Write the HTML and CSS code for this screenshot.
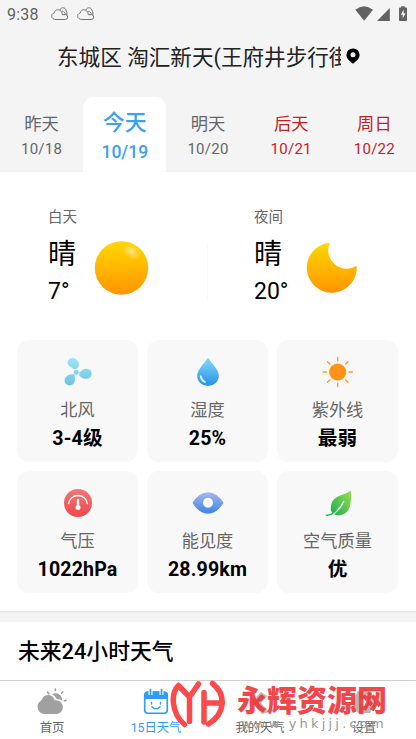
FILE: index.html
```html
<!DOCTYPE html>
<html lang="zh-CN">
<head>
<meta charset="utf-8">
<title>15日天气</title>
<link rel="stylesheet" href="styles.css">
</head>
<body>
<svg width="0" height="0" class="defs">
  <defs>
    <linearGradient id="gold" x1="0" y1="0" x2="0" y2="1"><stop offset="0" stop-color="#ffd800"/><stop offset="1" stop-color="#ff9500"/></linearGradient>
    <radialGradient id="shine"><stop offset="0" stop-color="#fff" stop-opacity=".5"/><stop offset="1" stop-color="#fff" stop-opacity="0"/></radialGradient>
    <linearGradient id="fan" gradientUnits="userSpaceOnUse" x1="0" y1="2" x2="0" y2="30"><stop offset="0" stop-color="#99e4fb"/><stop offset="1" stop-color="#6dc3e0"/></linearGradient>
    <linearGradient id="drop" x1="0" y1="0" x2="0" y2="1"><stop offset="0" stop-color="#85dafa"/><stop offset="1" stop-color="#2590e8"/></linearGradient>
    <linearGradient id="eye" x1="0" y1="0" x2="0" y2="1"><stop offset="0" stop-color="#a9b8ed"/><stop offset="1" stop-color="#3985e9"/></linearGradient>
    <linearGradient id="leaf" x1="1" y1="0" x2="0" y2="1"><stop offset="0" stop-color="#9bdf50"/><stop offset="1" stop-color="#17ae50"/></linearGradient>
    <linearGradient id="gauge" x1="0" y1="0" x2="0" y2="1"><stop offset="0" stop-color="#f07878"/><stop offset="1" stop-color="#f0464c"/></linearGradient>
    <symbol id="cloud" viewBox="0 0 18 14"><path d="M5 12.5H14.2A2.4 2.4 0 0 0 14.3 7.6L11.3 7.7C11.2 1.8 3.8 1.2 3.4 5.8C-.8 7-.1 12.5 5 12.5ZM9 2.8C9.8.1 15-.2 15.2 4.2C16.2 5.2 16 7 15.7 8.2M11.2 4.2C13 4.2 14.2 5.5 14.4 7.5" fill="none" stroke="#666" stroke-width=".9"/></symbol>
  </defs>
</svg>
<header class="top">
  <div class="status">
    <span class="clock">9:38</span>
    <svg class="cloud" width="18" height="14"><use href="#cloud"/></svg>
    <svg class="cloud second" width="18" height="14"><use href="#cloud"/></svg>
    <svg class="signals" width="53" height="16" viewBox="0 0 53 16"><path d="M.3 3.8Q9-3.2 18 3.8L9.2 14.8Z" fill="#626262"/><path d="M22 15H34.8V2Z" fill="#626262"/><path d="M46.2 1.5V.3H49.8V1.5H51A1 1 0 0 1 52 2.5V14A1 1 0 0 1 51 15H45A1 1 0 0 1 44 14V2.5A1 1 0 0 1 45 1.5Z" fill="#626262"/><path d="M48.7 3.5L45.8 8.7H47.7V12.5L50.6 7.3H48.7Z" fill="#f4f4f4"/></svg>
  </div>
  <div class="place">
    <h1>东城区 淘汇新天(王府井步行街)</h1>
    <svg width="14" height="16" viewBox="0 0 14 16"><path fill-rule="evenodd" d="M7 .4A6.5 6.5 0 0 0 .4 6.9C.4 10.8 4.5 13.4 7 15.7C9.5 13.4 13.6 10.8 13.6 6.9A6.5 6.5 0 0 0 7 .4ZM7 4.2A2.5 2.5 0 1 1 7 9.2A2.5 2.5 0 0 1 7 4.2Z"/></svg>
  </div>
  <nav class="days">
    <div class="day"><b>昨天</b><span>10/18</span></div>
    <div class="day active"><b>今天</b><span>10/19</span></div>
    <div class="day"><b>明天</b><span>10/20</span></div>
    <div class="day rest"><b>后天</b><span>10/21</span></div>
    <div class="day rest"><b>周日</b><span>10/22</span></div>
  </nav>
</header>
<main>
  <section class="today">
    <div class="halves">
      <div class="half">
        <div class="cond"><small>白天</small><strong>晴</strong><em>7°</em></div>
        <svg width="56" height="56" viewBox="0 0 56 56"><circle cx="27.5" cy="28" r="26.7" fill="url(#gold)"/><ellipse cx="37.5" cy="12" rx="10" ry="7" transform="rotate(38 38 12)" fill="url(#shine)"/></svg>
      </div>
      <div class="half">
        <div class="cond"><small>夜间</small><strong>晴</strong><em>20°</em></div>
        <svg width="56" height="56" viewBox="0 0 56 56"><path d="M25.8 2.8A25 25 0 1 0 52.7 25.8A18.5 18.5 0 0 1 25.8 2.8Z" fill="url(#gold)"/></svg>
      </div>
    </div>
    <div class="grid">
      <div class="card">
        <svg width="32" height="32" viewBox="0 0 32 32" fill="url(#fan)"><path d="M12.6 13.5C9 11 5.5 9.7 5.6 6.2C5.8 1 13.5.3 16 5.3C17.6 8.7 16.5 11.4 15.5 12.2Z"/><path d="M17.3 16.8C20.3 14 22 12.5 24.5 12.7C31 13.2 31.3 20.7 26.2 22.5C22.8 23.6 19.8 22 17.2 19.4Z"/><path d="M12.3 18.2C13 22.5 13.4 25 11.5 27.5C7.3 32 1.3 28 2.8 22.8C3.8 19.5 7.3 17.8 12.3 18.2Z"/><circle cx="14.3" cy="16.2" r="2.5"/></svg>
        <span>北风</span><b>3-4级</b>
      </div>
      <div class="card">
        <svg width="32" height="32" viewBox="0 0 32 32"><path d="M16 1.8C12 7.5 5.2 13.8 5.2 20A10.8 10 0 0 0 26.8 20C26.8 13.8 20 7.5 16 1.8Z" fill="url(#drop)"/><path d="M8.7 20.5Q9.5 24.5 13 26" fill="none" stroke="#e9f7ff" stroke-width="1.8" stroke-linecap="round"/></svg>
        <span>湿度</span><b>25%</b>
      </div>
      <div class="card">
        <svg width="32" height="32" viewBox="0 0 32 32" stroke="#ff981c" stroke-width="1.3" stroke-linecap="round"><circle cx="15.7" cy="16" r="8.6" fill="#ff9317" stroke="none"/><path d="M15.7 1.5V4.8M15.7 27.2V30.5M1 16H4.5M27 16H30.4M5.5 5.8L7.8 8M23.6 24L26 26.2M26 5.8L23.6 8M7.8 24L5.5 26.2"/></svg>
        <span>紫外线</span><b>最弱</b>
      </div>
      <div class="card">
        <svg width="32" height="32" viewBox="0 0 32 32"><circle cx="16" cy="16" r="14" fill="url(#gauge)"/><path d="M6.7 16.5A9.4 9.4 0 0 1 25.3 16.5" fill="none" stroke="#fff" stroke-width="1.4" stroke-linecap="round"/><path d="M16 13V19" stroke="#fff" stroke-width="2.4" stroke-linecap="round"/><circle cx="16" cy="20.5" r="2.5" fill="#fff"/></svg>
        <span>气压</span><b>1022hPa</b>
      </div>
      <div class="card">
        <svg width="32" height="32" viewBox="0 0 32 32"><path fill-rule="evenodd" d="M.4 15.7Q7 5.2 16 5.2T31.6 15.7Q25 26.7 16 26.7T.4 15.7ZM16 10.7A5 5 0 1 0 16 20.7A5 5 0 0 0 16 10.7Z" fill="url(#eye)"/></svg>
        <span>能见度</span><b>28.99km</b>
      </div>
      <div class="card">
        <svg width="32" height="32" viewBox="0 0 32 32"><path d="M28.8 3.2C24 9.2 7.3 6.5 9 23.8C11 28.5 16 29 20 27.8C30 24.8 29.3 12 28.8 3.2Z" fill="url(#leaf)"/><path d="M4.5 28.2C13 28.5 18 22 22 14" fill="none" stroke="#f8f8f8" stroke-width="1.5"/><path d="M3.5 27.5C9 28 13.5 24 16 21.5C13 26 9 29.5 4 28.8Z" fill="#20b451"/></svg>
        <span>空气质量</span><b>优</b>
      </div>
    </div>
  </section>
  <section class="hours"><h2>未来24小时天气</h2></section>
</main>
<footer class="tabbar">
  <div class="tab"><svg width="32" height="28" viewBox="0 0 32 28" fill="#a0a0a0"><path d="M9 26A7.3 7.3 0 0 1 6.5 12.3C8.5 5.5 17.5 5.2 19.8 12.3C30.5 11.8 30 26 21.5 26Z" transform="translate(-1 0)"/><path d="M16 6.2C20 3.8 26.5 6.5 26 12.5Q23.5 10.8 20.6 11C19.5 8.5 18 7 16 6.2Z"/><path d="M19.3 1V2.6M11.5 4L12.8 5.8M26.8 4L25.6 5.2M28.3 12.8L30 12.4" stroke="#a0a0a0" stroke-width="1.6" stroke-linecap="round"/></svg><span>首页</span></div>
  <div class="tab on"><svg width="32" height="28" viewBox="0 0 32 28"><rect x="4.7" y="4" width="22.6" height="21.3" rx="3.2" fill="#fff" stroke="#2f9df2" stroke-width="1.6"/><path d="M4.5 11V6.8Q4.5 3.5 8 3.5H24Q27.5 3.5 27.5 6.8V11Z" fill="#2f9df2"/><path d="M10.5 1.5V7M21.5 1.5V7" stroke="#fff" stroke-width="4"/><path d="M10.5 1.5V6.5M21.5 1.5V6.5" stroke="#2f9df2" stroke-width="1.7" stroke-linecap="round"/><path d="M11.5 14.5V16M20.5 14.5V16M12 18.7Q16 22.8 20 18.7" fill="none" stroke="#2f9df2" stroke-width="1.4" stroke-linecap="round"/></svg><span>15日天气</span></div>
  <div class="tab"><svg class="dim" width="32" height="28" viewBox="0 0 32 28"><path d="M7 14L17 4L23 8L17 15L25 24L18 26Z" fill="#a0a0a0"/></svg><span>我的天气</span></div>
  <div class="tab"><svg class="dim" width="32" height="28" viewBox="0 0 32 28"><path d="M10 3H22L28 14L22 25H10L4 14Z" fill="#a0a0a0"/><circle cx="16" cy="14" r="4" fill="#fff"/></svg><span>设置</span></div>
</footer>
<div class="mark">
  <svg width="56" height="48" viewBox="0 0 56 48" fill="none" stroke="#fa4a4c" stroke-width="5.5" stroke-linecap="round" stroke-linejoin="round"><path d="M14.5 44.5C2 34 0 14 8.5 5.5L19.5 17L28.5 4M19.5 17V41.5"/><path d="M34 12.5V42M34 23H49M42.5 3.5C57 15 55 34 38.5 44"/></svg>
  <div class="brand"><b>永辉资源网</b><span>www.yhkjjj.com</span></div>
</div>
</body>
</html>
```
FILE: styles.css
```css
* { box-sizing: border-box; margin: 0; padding: 0; }
body { position: relative; width: 416px; height: 739px; overflow: hidden; display: flex; flex-direction: column; background: #f4f4f4; font-family: Roboto, "Noto Sans CJK SC", sans-serif; color: #000; }
svg { display: block; flex: none; }
.defs { position: absolute; }
em { font-style: normal; }
.top { height: 172px; flex: none; display: flex; flex-direction: column; }
.status { height: 28px; display: flex; align-items: center; padding: 0 8px 0 7px; color: #626262; }
.clock { font-size: 16px; width: 44px; line-height: 20px; padding-top: 1px; letter-spacing: .2px; }
.second { margin-left: 8px; }
.signals { margin-left: auto; }
.place { height: 60px; margin-bottom: 9px; display: flex; align-items: center; padding-left: 57px; }
.place h1 { width: 284px; overflow: hidden; white-space: nowrap; font-size: 21.6px; line-height: 30px; font-weight: 400; color: #222; }
.place svg { margin-left: 5px; margin-top: -4px; }
.days { display: grid; grid-template-columns: repeat(5, 1fr); height: 75px; }
.day { display: flex; flex-direction: column; align-items: center; color: #666; padding-top: 16px; }
.day b { font-size: 17.3px; line-height: 22px; font-weight: 400; }
.day span { font-size: 15px; line-height: 20px; margin-top: 4px; letter-spacing: .25px; }
.active { background: #fff; border-radius: 11px 11px 0 0; color: #3ba2ef; padding-top: 12px; }
.active b { font-size: 22px; line-height: 28px; font-weight: 500; }
.active span { font-size: 17.5px; line-height: 22px; font-weight: 500; letter-spacing: 0; }
.rest { color: #c42127; }
.today { height: 439px; background: #fff; padding: 0 18px 0 17px; box-shadow: 0 1px 2px #ddd; }
.halves { display: flex; height: 168px; padding-top: 36px; margin: 0 -18px 0 -17px; }
.half { width: 206px; display: flex; padding-left: 48px; }
.half + .half::before { content: ""; align-self: center; width: 1px; height: 58px; margin: -6px -1px 0 0; background: #f8f8f8; transform: translateX(-47px); }
.cond { width: 46px; display: flex; flex-direction: column; }
.cond small { font-size: 14.5px; line-height: 20px; color: #666; }
.cond strong { font-size: 28px; line-height: 36px; margin-top: 9px; font-weight: 400; }
.cond em { font-size: 23px; line-height: 28px; margin-top: 5px; }
.half > svg { margin-top: 32px; }
.half + .half > svg { margin-left: 4px; }
.grid { display: grid; grid-template-columns: repeat(3, 1fr); gap: 9px; }
.card { height: 122px; background: #f8f8f8; border-radius: 12px; display: flex; flex-direction: column; align-items: center; padding-top: 16px; }
.card span { font-size: 17.2px; line-height: 24px; margin-top: 10px; color: #666; }
.card b { font-size: 19.6px; line-height: 26px; margin-top: 4px; font-weight: 700; letter-spacing: .15px; white-space: nowrap; }
.hours { height: 58px; margin-top: 11px; background: #fff; padding: 15px 18px 13px; }
.hours h2 { font-size: 21.8px; line-height: 30px; font-weight: 500; }
.tabbar { height: 59px; flex: none; display: grid; grid-template-columns: repeat(4, 1fr); background: #fff; border-top: 1px solid #cfcfcf; }
.tab { display: flex; flex-direction: column; align-items: center; padding-top: 7px; font-size: 12.3px; color: #666; }
.tab span { line-height: 18px; margin-top: 3px; }
.dim { opacity: .75; }
.on { color: #2f9df2; }
.mark { position: absolute; left: 170px; top: 680px; display: flex; }
.brand { padding: 1px 0 0 11px; width: 190px; color: #f0393d; }
.brand b { display: block; font-family: "Noto Sans CJK SC", sans-serif; font-size: 30px; font-weight: 900; line-height: 34px; white-space: nowrap; opacity: .93; }
.brand span { display: block; font-family: "DejaVu Sans", sans-serif; font-size: 13px; line-height: 14px; margin-top: 2px; letter-spacing: 3.2px; color: #999; padding-left: 4px; white-space: nowrap; }
```
